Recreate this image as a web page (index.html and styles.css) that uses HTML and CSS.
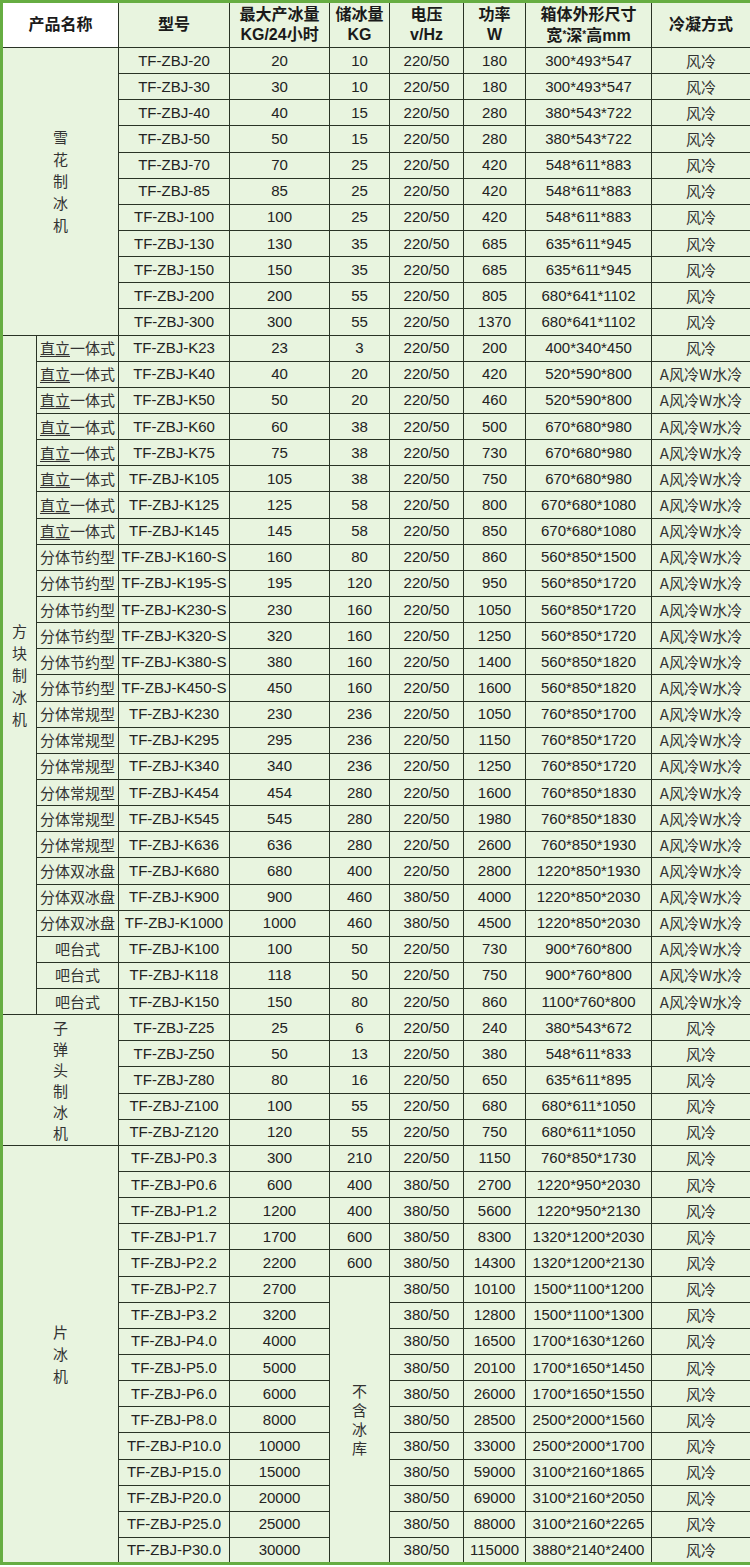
FILE: index.html
```html
<!DOCTYPE html>
<html lang="zh-CN">
<head>
<meta charset="utf-8">
<title>制冰机参数表</title>
<link rel="stylesheet" href="styles.css">
</head>
<body>
<table class="spec">
<colgroup>
<col class="c-a"><col class="c-b"><col class="c-model"><col class="c-out"><col class="c-store"><col class="c-volt"><col class="c-pow"><col class="c-size"><col class="c-cool">
</colgroup>
<thead>
<tr class="head">
<th colspan="2" class="h-name">产品名称</th>
<th>型号</th>
<th>最大产冰量<br>KG/24小时</th>
<th>储冰量<br>KG</th>
<th>电压<br>v/Hz</th>
<th>功率<br>W</th>
<th>箱体外形尺寸<br>宽<span class="ast">*</span>深<span class="ast">*</span>高mm</th>
<th>冷凝方式</th>
</tr>
</thead>
<tbody>
<tr><td colspan="2" rowspan="11" class="cat cat-snow"><span class="vt">雪花制冰机</span></td><td>TF-ZBJ-20</td><td>20</td><td>10</td><td>220/50</td><td>180</td><td>300*493*547</td><td class="cn">风冷</td></tr>
<tr><td>TF-ZBJ-30</td><td>30</td><td>10</td><td>220/50</td><td>180</td><td>300*493*547</td><td class="cn">风冷</td></tr>
<tr><td>TF-ZBJ-40</td><td>40</td><td>15</td><td>220/50</td><td>280</td><td>380*543*722</td><td class="cn">风冷</td></tr>
<tr><td>TF-ZBJ-50</td><td>50</td><td>15</td><td>220/50</td><td>280</td><td>380*543*722</td><td class="cn">风冷</td></tr>
<tr><td>TF-ZBJ-70</td><td>70</td><td>25</td><td>220/50</td><td>420</td><td>548*611*883</td><td class="cn">风冷</td></tr>
<tr><td>TF-ZBJ-85</td><td>85</td><td>25</td><td>220/50</td><td>420</td><td>548*611*883</td><td class="cn">风冷</td></tr>
<tr><td>TF-ZBJ-100</td><td>100</td><td>25</td><td>220/50</td><td>420</td><td>548*611*883</td><td class="cn">风冷</td></tr>
<tr><td>TF-ZBJ-130</td><td>130</td><td>35</td><td>220/50</td><td>685</td><td>635*611*945</td><td class="cn">风冷</td></tr>
<tr><td>TF-ZBJ-150</td><td>150</td><td>35</td><td>220/50</td><td>685</td><td>635*611*945</td><td class="cn">风冷</td></tr>
<tr><td>TF-ZBJ-200</td><td>200</td><td>55</td><td>220/50</td><td>805</td><td>680*641*1102</td><td class="cn">风冷</td></tr>
<tr><td>TF-ZBJ-300</td><td>300</td><td>55</td><td>220/50</td><td>1370</td><td>680*641*1102</td><td class="cn">风冷</td></tr>

<tr><td rowspan="26" class="cat"><span class="vt">方块制冰机</span></td><td class="cn type"><span class="ul">直立</span>一体式</td><td>TF-ZBJ-K23</td><td>23</td><td>3</td><td>220/50</td><td>200</td><td>400*340*450</td><td class="cn">风冷</td></tr>
<tr><td class="cn type"><span class="ul">直立</span>一体式</td><td>TF-ZBJ-K40</td><td>40</td><td>20</td><td>220/50</td><td>420</td><td>520*590*800</td><td class="cn">A风冷W水冷</td></tr>
<tr><td class="cn type"><span class="ul">直立</span>一体式</td><td>TF-ZBJ-K50</td><td>50</td><td>20</td><td>220/50</td><td>460</td><td>520*590*800</td><td class="cn">A风冷W水冷</td></tr>
<tr><td class="cn type"><span class="ul">直立</span>一体式</td><td>TF-ZBJ-K60</td><td>60</td><td>38</td><td>220/50</td><td>500</td><td>670*680*980</td><td class="cn">A风冷W水冷</td></tr>
<tr><td class="cn type"><span class="ul">直立</span>一体式</td><td>TF-ZBJ-K75</td><td>75</td><td>38</td><td>220/50</td><td>730</td><td>670*680*980</td><td class="cn">A风冷W水冷</td></tr>
<tr><td class="cn type"><span class="ul">直立</span>一体式</td><td>TF-ZBJ-K105</td><td>105</td><td>38</td><td>220/50</td><td>750</td><td>670*680*980</td><td class="cn">A风冷W水冷</td></tr>
<tr><td class="cn type"><span class="ul">直立</span>一体式</td><td>TF-ZBJ-K125</td><td>125</td><td>58</td><td>220/50</td><td>800</td><td>670*680*1080</td><td class="cn">A风冷W水冷</td></tr>
<tr><td class="cn type"><span class="ul">直立</span>一体式</td><td>TF-ZBJ-K145</td><td>145</td><td>58</td><td>220/50</td><td>850</td><td>670*680*1080</td><td class="cn">A风冷W水冷</td></tr>
<tr><td class="cn type">分体节约型</td><td>TF-ZBJ-K160-S</td><td>160</td><td>80</td><td>220/50</td><td>860</td><td>560*850*1500</td><td class="cn">A风冷W水冷</td></tr>
<tr><td class="cn type">分体节约型</td><td>TF-ZBJ-K195-S</td><td>195</td><td>120</td><td>220/50</td><td>950</td><td>560*850*1720</td><td class="cn">A风冷W水冷</td></tr>
<tr><td class="cn type">分体节约型</td><td>TF-ZBJ-K230-S</td><td>230</td><td>160</td><td>220/50</td><td>1050</td><td>560*850*1720</td><td class="cn">A风冷W水冷</td></tr>
<tr><td class="cn type">分体节约型</td><td>TF-ZBJ-K320-S</td><td>320</td><td>160</td><td>220/50</td><td>1250</td><td>560*850*1720</td><td class="cn">A风冷W水冷</td></tr>
<tr><td class="cn type">分体节约型</td><td>TF-ZBJ-K380-S</td><td>380</td><td>160</td><td>220/50</td><td>1400</td><td>560*850*1820</td><td class="cn">A风冷W水冷</td></tr>
<tr><td class="cn type">分体节约型</td><td>TF-ZBJ-K450-S</td><td>450</td><td>160</td><td>220/50</td><td>1600</td><td>560*850*1820</td><td class="cn">A风冷W水冷</td></tr>
<tr><td class="cn type">分体常规型</td><td>TF-ZBJ-K230</td><td>230</td><td>236</td><td>220/50</td><td>1050</td><td>760*850*1700</td><td class="cn">A风冷W水冷</td></tr>
<tr><td class="cn type">分体常规型</td><td>TF-ZBJ-K295</td><td>295</td><td>236</td><td>220/50</td><td>1150</td><td>760*850*1720</td><td class="cn">A风冷W水冷</td></tr>
<tr><td class="cn type">分体常规型</td><td>TF-ZBJ-K340</td><td>340</td><td>236</td><td>220/50</td><td>1250</td><td>760*850*1720</td><td class="cn">A风冷W水冷</td></tr>
<tr><td class="cn type">分体常规型</td><td>TF-ZBJ-K454</td><td>454</td><td>280</td><td>220/50</td><td>1600</td><td>760*850*1830</td><td class="cn">A风冷W水冷</td></tr>
<tr><td class="cn type">分体常规型</td><td>TF-ZBJ-K545</td><td>545</td><td>280</td><td>220/50</td><td>1980</td><td>760*850*1830</td><td class="cn">A风冷W水冷</td></tr>
<tr><td class="cn type">分体常规型</td><td>TF-ZBJ-K636</td><td>636</td><td>280</td><td>220/50</td><td>2600</td><td>760*850*1930</td><td class="cn">A风冷W水冷</td></tr>
<tr><td class="cn type">分体双冰盘</td><td>TF-ZBJ-K680</td><td>680</td><td>400</td><td>220/50</td><td>2800</td><td>1220*850*1930</td><td class="cn">A风冷W水冷</td></tr>
<tr><td class="cn type">分体双冰盘</td><td>TF-ZBJ-K900</td><td>900</td><td>460</td><td>380/50</td><td>4000</td><td>1220*850*2030</td><td class="cn">A风冷W水冷</td></tr>
<tr><td class="cn type">分体双冰盘</td><td>TF-ZBJ-K1000</td><td>1000</td><td>460</td><td>380/50</td><td>4500</td><td>1220*850*2030</td><td class="cn">A风冷W水冷</td></tr>
<tr><td class="cn type">吧台式</td><td>TF-ZBJ-K100</td><td>100</td><td>50</td><td>220/50</td><td>730</td><td>900*760*800</td><td class="cn">A风冷W水冷</td></tr>
<tr><td class="cn type">吧台式</td><td>TF-ZBJ-K118</td><td>118</td><td>50</td><td>220/50</td><td>750</td><td>900*760*800</td><td class="cn">A风冷W水冷</td></tr>
<tr><td class="cn type">吧台式</td><td>TF-ZBJ-K150</td><td>150</td><td>80</td><td>220/50</td><td>860</td><td>1100*760*800</td><td class="cn">A风冷W水冷</td></tr>

<tr><td colspan="2" rowspan="5" class="cat"><span class="vt vt-tight">子弹头制冰机</span></td><td>TF-ZBJ-Z25</td><td>25</td><td>6</td><td>220/50</td><td>240</td><td>380*543*672</td><td class="cn">风冷</td></tr>
<tr><td>TF-ZBJ-Z50</td><td>50</td><td>13</td><td>220/50</td><td>380</td><td>548*611*833</td><td class="cn">风冷</td></tr>
<tr><td>TF-ZBJ-Z80</td><td>80</td><td>16</td><td>220/50</td><td>650</td><td>635*611*895</td><td class="cn">风冷</td></tr>
<tr><td>TF-ZBJ-Z100</td><td>100</td><td>55</td><td>220/50</td><td>680</td><td>680*611*1050</td><td class="cn">风冷</td></tr>
<tr><td>TF-ZBJ-Z120</td><td>120</td><td>55</td><td>220/50</td><td>750</td><td>680*611*1050</td><td class="cn">风冷</td></tr>

<tr><td colspan="2" rowspan="16" class="cat"><span class="vt">片冰机</span></td><td>TF-ZBJ-P0.3</td><td>300</td><td>210</td><td>220/50</td><td>1150</td><td>760*850*1730</td><td class="cn">风冷</td></tr>
<tr><td>TF-ZBJ-P0.6</td><td>600</td><td>400</td><td>380/50</td><td>2700</td><td>1220*950*2030</td><td class="cn">风冷</td></tr>
<tr><td>TF-ZBJ-P1.2</td><td>1200</td><td>400</td><td>380/50</td><td>5600</td><td>1220*950*2130</td><td class="cn">风冷</td></tr>
<tr><td>TF-ZBJ-P1.7</td><td>1700</td><td>600</td><td>380/50</td><td>8300</td><td>1320*1200*2030</td><td class="cn">风冷</td></tr>
<tr><td>TF-ZBJ-P2.2</td><td>2200</td><td>600</td><td>380/50</td><td>14300</td><td>1320*1200*2130</td><td class="cn">风冷</td></tr>
<tr><td>TF-ZBJ-P2.7</td><td>2700</td><td rowspan="11" class="cat-store"><span class="vt vt-store">不含冰库</span></td><td>380/50</td><td>10100</td><td>1500*1100*1200</td><td class="cn">风冷</td></tr>
<tr><td>TF-ZBJ-P3.2</td><td>3200</td><td>380/50</td><td>12800</td><td>1500*1100*1300</td><td class="cn">风冷</td></tr>
<tr><td>TF-ZBJ-P4.0</td><td>4000</td><td>380/50</td><td>16500</td><td>1700*1630*1260</td><td class="cn">风冷</td></tr>
<tr><td>TF-ZBJ-P5.0</td><td>5000</td><td>380/50</td><td>20100</td><td>1700*1650*1450</td><td class="cn">风冷</td></tr>
<tr><td>TF-ZBJ-P6.0</td><td>6000</td><td>380/50</td><td>26000</td><td>1700*1650*1550</td><td class="cn">风冷</td></tr>
<tr><td>TF-ZBJ-P8.0</td><td>8000</td><td>380/50</td><td>28500</td><td>2500*2000*1560</td><td class="cn">风冷</td></tr>
<tr><td>TF-ZBJ-P10.0</td><td>10000</td><td>380/50</td><td>33000</td><td>2500*2000*1700</td><td class="cn">风冷</td></tr>
<tr><td>TF-ZBJ-P15.0</td><td>15000</td><td>380/50</td><td>59000</td><td>3100*2160*1865</td><td class="cn">风冷</td></tr>
<tr><td>TF-ZBJ-P20.0</td><td>20000</td><td>380/50</td><td>69000</td><td>3100*2160*2050</td><td class="cn">风冷</td></tr>
<tr><td>TF-ZBJ-P25.0</td><td>25000</td><td>380/50</td><td>88000</td><td>3100*2160*2265</td><td class="cn">风冷</td></tr>
<tr><td>TF-ZBJ-P30.0</td><td>30000</td><td>380/50</td><td>115000</td><td>3880*2140*2400</td><td class="cn">风冷</td></tr>
</tbody>
</table>
</body>
</html>
```

FILE: styles.css
```css
html, body {
  margin: 0;
  padding: 0;
  background: #ffffff;
}

.spec {
  width: 750px;
  border-collapse: collapse;
  table-layout: fixed;
  border: 3px solid #66ad42;
  background: #e8f4df;
  font-family: "Liberation Sans", Arial, "Noto Sans CJK SC", sans-serif;
  font-size: 15px;
  color: #222222;
}

.c-a { width: 35px; }
.c-b { width: 82px; }
.c-model { width: 111px; }
.c-out { width: 100px; }
.c-store { width: 60px; }
.c-volt { width: 74px; }
.c-pow { width: 62px; }
.c-size { width: 126px; }
.c-cool { width: 100px; }

.spec th,
.spec td {
  border: 1px solid #2a3326;
  text-align: center;
  vertical-align: middle;
  padding: 0;
  white-space: nowrap;
  overflow: hidden;
}

.spec tbody tr {
  height: 26.15px;
}

.spec td {
  line-height: 18px;
}

.head {
  height: 46px;
}

.head th {
  font-family: "Liberation Sans", Arial, "Noto Sans CJK SC", sans-serif;
  font-weight: bold;
  font-size: 16px;
  line-height: 20px;
  color: #1a1a1a;
}

.head .h-name {
  background: #ffffff;
  font-size: 16px;
}

.ast {
  font-size: 10px;
  vertical-align: 3px;
}

.cn {
  font-family: "Noto Sans CJK SC", sans-serif;
  font-size: 15px;
  color: #333333;
}

.ul {
  text-decoration: underline;
  text-underline-offset: 2px;
}

.cat,
.cat-store {
  font-family: "Noto Sans CJK SC", sans-serif;
  color: #333333;
}

.spec .cat-snow {
  padding-bottom: 20px;
}

.spec .cat .vt,
.spec .cat-store .vt {
  display: inline-block;
  width: 1em;
  font-size: 15px;
  line-height: 22px;
  white-space: normal;
  word-break: break-all;
  vertical-align: middle;
}

.spec .cat .vt-tight {
  line-height: 21px;
}

.spec .cat-store .vt-store {
  line-height: 19px;
}
```
